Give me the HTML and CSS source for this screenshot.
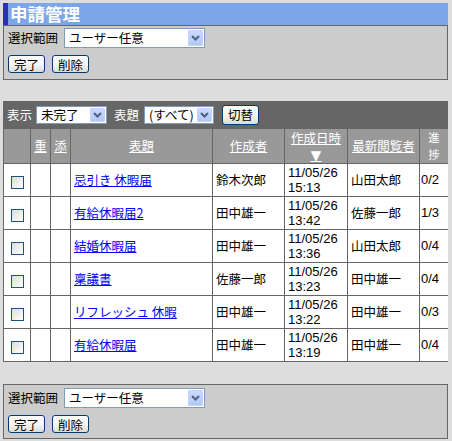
FILE: index.html
```html
<!DOCTYPE html>
<html lang="ja">
<head>
<meta charset="utf-8">
<title>申請管理</title>
<link rel="stylesheet" href="styles.css">
</head>
<body>
<h1 class="title">申請管理</h1>

<div class="panel">
  <div class="row">
    <span class="lbl">選択範囲</span>
    <div class="sel sel-wide"><span class="val">ユーザー任意</span><span class="arr"><svg width="9" height="6" viewBox="0 0 9 6"><path d="M1 1 L4.5 4.5 L8 1" fill="none" stroke="#4d6185" stroke-width="2"/></svg></span></div>
  </div>
  <div class="row btns">
    <button class="xbtn">完了</button>
    <button class="xbtn">削除</button>
  </div>
</div>

<div class="list">
  <div class="toolbar">
    <span class="tlbl">表示</span>
    <div class="sel sel-sm sel-a"><span class="val">未完了</span><span class="arr"><svg width="9" height="6" viewBox="0 0 9 6"><path d="M1 1 L4.5 4.5 L8 1" fill="none" stroke="#4d6185" stroke-width="2"/></svg></span></div>
    <span class="tlbl tlbl-2">表題</span>
    <div class="sel sel-sm sel-b"><span class="val">(すべて)</span><span class="arr"><svg width="9" height="6" viewBox="0 0 9 6"><path d="M1 1 L4.5 4.5 L8 1" fill="none" stroke="#4d6185" stroke-width="2"/></svg></span></div>
    <button class="xbtn xbtn-tall">切替</button>
  </div>
  <table class="grid">
    <colgroup>
      <col class="c1"><col class="c2"><col class="c3"><col class="c4"><col class="c5"><col class="c6"><col class="c7"><col class="c8">
    </colgroup>
    <thead>
      <tr>
        <th></th>
        <th><a href="#">重</a></th>
        <th><a href="#">添</a></th>
        <th><a href="#">表題</a></th>
        <th><a href="#">作成者</a></th>
        <th><a href="#" class="stack"><span class="st-txt">作成日時</span><span class="st-arrow">▼</span></a></th>
        <th><a href="#">最新閲覧者</a></th>
        <th><span class="stack"><span class="st-ch">進</span><span class="st-ch">捗</span></span></th>
      </tr>
    </thead>
    <tbody>
      <tr>
        <td class="cc"><input type="checkbox" class="cb"></td><td></td><td></td>
        <td><a href="#">忌引き 休暇届</a></td><td>鈴木次郎</td><td class="dt">11/05/26<br>15:13</td><td>山田太郎</td><td class="pg">0/2</td>
      </tr>
      <tr>
        <td class="cc"><input type="checkbox" class="cb"></td><td></td><td></td>
        <td><a href="#">有給休暇届2</a></td><td>田中雄一</td><td class="dt">11/05/26<br>13:42</td><td>佐藤一郎</td><td class="pg">1/3</td>
      </tr>
      <tr>
        <td class="cc"><input type="checkbox" class="cb"></td><td></td><td></td>
        <td><a href="#">結婚休暇届</a></td><td>田中雄一</td><td class="dt">11/05/26<br>13:36</td><td>山田太郎</td><td class="pg">0/4</td>
      </tr>
      <tr>
        <td class="cc"><input type="checkbox" class="cb"></td><td></td><td></td>
        <td><a href="#">稟議書</a></td><td>佐藤一郎</td><td class="dt">11/05/26<br>13:23</td><td>田中雄一</td><td class="pg">0/4</td>
      </tr>
      <tr>
        <td class="cc"><input type="checkbox" class="cb"></td><td></td><td></td>
        <td><a href="#">リフレッシュ 休暇</a></td><td>田中雄一</td><td class="dt">11/05/26<br>13:22</td><td>田中雄一</td><td class="pg">0/3</td>
      </tr>
      <tr>
        <td class="cc"><input type="checkbox" class="cb"></td><td></td><td></td>
        <td><a href="#">有給休暇届</a></td><td>田中雄一</td><td class="dt">11/05/26<br>13:19</td><td>田中雄一</td><td class="pg">0/4</td>
      </tr>
    </tbody>
  </table>
</div>

<div class="panel panel-bottom">
  <div class="row">
    <span class="lbl">選択範囲</span>
    <div class="sel sel-wide"><span class="val">ユーザー任意</span><span class="arr"><svg width="9" height="6" viewBox="0 0 9 6"><path d="M1 1 L4.5 4.5 L8 1" fill="none" stroke="#4d6185" stroke-width="2"/></svg></span></div>
  </div>
  <div class="row btns">
    <button class="xbtn">完了</button>
    <button class="xbtn">削除</button>
  </div>
</div>
</body>
</html>
```

FILE: styles.css
```css
* { box-sizing: border-box; }

html { background: #dddddd; }

body {
  margin: 3px;
  width: 445px;
  font-family: "Noto Sans CJK JP", sans-serif;
  font-size: 12.5px;
  color: #000;
}

.title {
  margin: 0;
  height: 22px;
  background: #7ca6e8;
  border-left: 5px solid #2f2fbf;
  color: #fff;
  font-size: 17.5px;
  font-weight: bold;
  line-height: 22px;
  padding-left: 2px;
}

.panel {
  background: #cccccc;
  border: 1px solid #666;
  padding: 2px 4px 6px;
  display: flex;
  flex-direction: column;
  gap: 7px;
}

.panel-bottom {
  margin-top: 22px;
  padding-top: 3px;
  padding-bottom: 5px;
}

.row {
  display: flex;
  align-items: center;
  gap: 6px;
}

.btns { gap: 7px; }

.lbl { line-height: 18px; }

.sel {
  display: flex;
  align-items: center;
  background: #fff;
  border: 1px solid #7f9db9;
  height: 20px;
  padding: 1px;
  color: #000;
}

.sel .val {
  flex: 1;
  padding-left: 3px;
  white-space: nowrap;
  line-height: 16px;
}

.sel .arr {
  width: 15px;
  align-self: stretch;
  background: linear-gradient(#cbdafc, #b4c8f6);
  border: 1px solid #c3d3fd;
  border-radius: 1px;
  display: flex;
  align-items: center;
  justify-content: center;
}

.sel-wide { width: 141px; }

.sel-sm { height: 18px; }
.sel-sm .val { line-height: 15px; }
.sel-a { width: 71px; }
.sel-b { width: 70px; }

.xbtn {
  font: inherit;
  height: 18px;
  padding: 0 5px;
  border: 1px solid #003c74;
  border-radius: 3px;
  background: linear-gradient(#ffffff 0%, #f6f5f0 55%, #dedbd0 100%);
  color: #000;
  line-height: 15px;
  margin: 0;
}

.xbtn-tall { height: 20px; margin-left: 8px; }

.list { margin-top: 21px; }

.toolbar {
  display: flex;
  align-items: center;
  height: 27px;
  background: #666666;
  color: #fff;
  padding-left: 4px;
}

.tlbl { margin-right: 4px; }
.tlbl-2 { margin-left: 7px; margin-right: 5px; }

.grid {
  width: 445px;
  border-collapse: collapse;
  table-layout: fixed;
  background: #fff;
}

.c1 { width: 27px; }
.c2 { width: 20px; }
.c3 { width: 20px; }
.c4 { width: 142px; }
.c5 { width: 72px; }
.c6 { width: 63px; }
.c7 { width: 72px; }
.c8 { width: 29px; }

.grid th,
.grid td {
  border: 1px solid #666;
  padding: 0 3px;
  vertical-align: middle;
  white-space: nowrap;
}

.grid th {
  background: #999999;
  color: #fff;
  font-weight: normal;
  height: 35px;
  line-height: 18px;
  text-align: center;
}

.grid th a { color: #fff; text-decoration: underline; }

.stack {
  display: inline-flex;
  flex-direction: column;
  align-items: center;
  vertical-align: middle;
}

.st-txt { line-height: 18.5px; text-decoration: underline; }

.st-arrow {
  font-family: "DejaVu Sans", sans-serif;
  font-size: 13.5px;
  line-height: 15.5px;
  text-decoration: underline;
}

.st-ch {
  font-size: 11.5px;
  line-height: 16.8px;
}

.grid td {
  height: 33px;
  text-align: left;
  line-height: 18px;
}

.grid td a { color: #0000ff; text-decoration: underline; }

.grid td.dt {
  font-family: "Liberation Sans", sans-serif;
  font-size: 13px;
  line-height: 15px;
}

.grid td.pg {
  padding-left: 1px;
  font-family: "Liberation Sans", sans-serif;
  font-size: 13px;
}

.grid td.cc { text-align: center; padding: 0; }

.cb {
  appearance: none;
  -webkit-appearance: none;
  display: inline-block;
  width: 13px;
  height: 13px;
  margin: 2px 0 0;
  border: 1px solid #1c5180;
  background: linear-gradient(135deg, #dcdcd7 0%, #ffffff 100%);
  vertical-align: middle;
}
```
